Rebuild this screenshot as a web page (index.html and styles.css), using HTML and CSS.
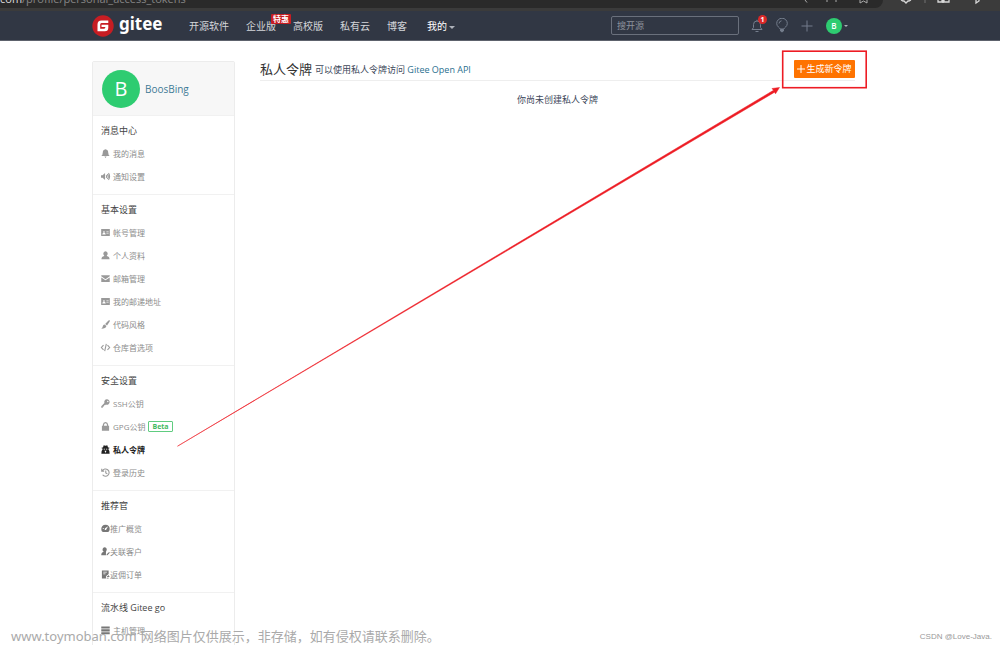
FILE: index.html
```html
<!DOCTYPE html>
<html lang="zh-CN">
<head>
<meta charset="utf-8">
<title>私人令牌 - Gitee</title>
<link rel="stylesheet" href="styles.css">
</head>
<body>
<div class="page">
  <div class="browser">
    <div class="address"><span class="url"><b>com</b>/profile/personal_access_tokens</span>
      <svg class="address-icons" width="70" height="8" viewBox="0 0 70 8" fill="none" stroke="#aaa"><path d="M5 0l2 2.500M27 0v2M36 0v2M60 0v3l3.500-2 3.500 2V0"/></svg>
    </div>
    <svg class="browser-icons" width="100" height="8" viewBox="0 0 100 8" fill="none" stroke="#d8d8d8" stroke-width="1.300"><path d="M1 0l2 1h1l2 2 2-2h1l2-1M38 0v2h4V0M43 0v3M44 0v2h5V0M76 0v3l3-2V0"/><path stroke="#666" d="M25 0v3"/></svg>
  </div>

  <header class="topbar">
    <a class="logo" href="#" aria-label="gitee">
      <svg width="22" height="22" viewBox="0 0 22 22"><circle cx="11" cy="11" r="10.700" fill="#c71d23"/><path d="M16.300 5.500H9.500Q5.500 5.500 5.500 9.500v6.700h7.300q3.500 0 3.500-3.500V9.800H9.500v2.300h3.900q-.1 1.600-1.300 1.600H8.200V9.500q0-1.500 1.300-1.500h6.800z" fill="#fff"/></svg>
      <span class="wordmark">gitee</span>
    </a>
    <nav class="nav">
      <a href="#">开源软件</a>
      <a href="#" class="hot">企业版<span class="tag">特惠</span></a>
      <a href="#">高校版</a>
      <a href="#">私有云</a>
      <a href="#">博客</a>
      <a href="#" class="mine">我的<i class="caret"></i></a>
    </nav>
    <input class="search" type="text" placeholder="搜开源" aria-label="搜开源">
    <div class="tools">
      <button class="tool bell" aria-label="通知">
        <svg width="12" height="14" viewBox="0 0 12 14" fill="none" stroke="#747d8c"><path d="M1 10.500h10L9.500 8.500V5.500a3.500 3.500 0 0 0-7 0v3zM6 2V.8M4.500 12.500h3"/></svg>
        <span class="count">1</span>
      </button>
      <button class="tool" aria-label="推荐">
        <svg width="12" height="15" viewBox="0 0 12 15" fill="none" stroke="#747d8c"><path d="M4.200 11C3.800 9.500.7 8.700.7 5.500a5.300 5.300 0 0 1 10.600 0c0 3.200-3.100 4-3.500 5.500zM3 5.500a3 3 0 0 1 2.500-2.700"/><path d="M4.500 11.500h3v1.500L6 14l-1.500-1z" fill="#747d8c"/></svg>
      </button>
      <button class="tool" aria-label="新建">
        <svg width="12" height="12" viewBox="0 0 12 12" stroke="#747d8c"><path d="M6 .5v11M.5 6h11"/></svg>
      </button>
      <button class="tool account" aria-label="账户"><span class="avatar small">B</span><i class="caret"></i></button>
    </div>
  </header>

  <div class="layout">
    <aside class="sidebar">
      <div class="profile"><span class="avatar">B</span><a href="#">BoosBing</a></div>
      <section class="group">
        <h2>消息中心</h2>
        <a href="#"><svg class="icon" viewBox="0 0 10 10"><path d="M5 .3Q8 .8 8 4q0 2.500 1.700 3.900H.3Q2 6.500 2 4q0-3.200 3-3.700zM3.800 8.300h2.400L5 9.900z"/></svg>我的消息</a>
        <a href="#"><svg class="icon" viewBox="0 0 10 10"><path d="M0 3.500h1.800L4.500 1v8L1.800 6.500H0z"/><path class="line" d="M5.700 3.500q1.300 1.500 0 3M7 2.300q2.200 2.700 0 5.400M8.300 1.200q2.500 3.800 0 7.600"/></svg>通知设置</a>
      </section>
      <section class="group">
        <h2>基本设置</h2>
        <a href="#"><svg class="icon" viewBox="0 0 10 10"><path fill-rule="evenodd" d="M.2 1.200h9.600v7.600H.2zM1.500 2.700v4.500h3.700Q5 5.500 3.800 5.200q.8-1.700-.5-1.900Q2 3.500 2.800 5.200L1.500 6.500V2.700zM6 3.200V4h2.500v-.8zM6 5.200V6h2.500v-.8z"/></svg>帐号管理</a>
        <a href="#"><svg class="icon" viewBox="0 0 10 10"><path d="M5 .3a2.400 2.600 0 0 1 1.500 4.600v.6Q9.500 6 9.500 9.300h-9Q.5 6 3.500 5.500v-.6A2.400 2.600 0 0 1 5 .3z"/></svg>个人资料</a>
        <a href="#"><svg class="icon" viewBox="0 0 10 10"><path d="M.3 1.300h9.400v1.300L5 5.800.3 2.600zM.3 3.800L5 7l4.700-3.200v5H.3z"/></svg>邮箱管理</a>
        <a href="#"><svg class="icon" viewBox="0 0 10 10"><path fill-rule="evenodd" d="M.2 1.200h9.600v7.600H.2zM1.500 2.700v4.500h3.700Q5 5.500 3.800 5.200q.8-1.700-.5-1.900Q2 3.500 2.800 5.200L1.500 6.500V2.700zM6 3.200V4h2.500v-.8zM6 5.200V6h2.500v-.8z"/></svg>我的邮递地址</a>
        <a href="#"><svg class="icon" viewBox="0 0 10 10"><path d="M9.700.3Q10.200.8 9.500 2L6.700 6 4.600 4.400 8.300.6Q9.200 0 9.700.3zM4 5l2 1.600Q5.500 9.700.3 9.700 2 8.500 2 7 2.300 5.200 4 5z"/></svg>代码风格</a>
        <a href="#"><svg class="icon" viewBox="0 0 10 10"><path class="line" d="M2.800 2.300L.4 5l2.400 2.700M7.200 2.300L9.600 5 7.200 7.700M5.900 1L4.100 9"/></svg>仓库首选项</a>
      </section>
      <section class="group">
        <h2>安全设置</h2>
        <a href="#"><svg class="icon" viewBox="0 0 10 10"><path fill-rule="evenodd" d="M6.500.4a3 3 0 1 1-1 5.800L4.500 7H3.300v1.300H2v1.300H.3V8L3.800 4.500A3 3 0 0 1 6.500.4zM7.500 1.900a.8.8 0 1 0 .1 1.600.8.800 0 0 0-.1-1.600z"/></svg>SSH公钥</a>
        <a href="#"><svg class="icon" viewBox="0 0 10 10"><path fill-rule="evenodd" d="M1 4.300h1V3q.3-2.800 3-2.900Q7.700.2 8 3v1.300h1v5.400H1zM3.400 4.300h3.200V3Q6.400 1.600 5 1.500 3.600 1.600 3.400 3z"/></svg>GPG公钥<span class="beta">Beta</span></a>
        <a href="#" class="active" aria-current="page"><svg class="icon" viewBox="0 0 10 10"><path fill-rule="evenodd" d="M3 .2l2 .6 2-.6.8 2.600H9.200v1H8.300V5q1.400.8 1.300 4.700H.4Q.3 5.800 1.700 5V3.800H.8v-1h1.400zM3 4.200v.9h1.500v-.9zM5.500 4.200v.9H7v-.9zM3.900 6.500L5 8.800l1.100-2.300z"/></svg>私人令牌</a>
        <a href="#"><svg class="icon" viewBox="0 0 10 10"><path class="line" d="M1.500 3.200a4 4 0 1 1 .3 4.300M.8.800v2.700h2.700M5.300 2.700v2.700l1.700 1"/></svg>登录历史</a>
      </section>
      <section class="group compact">
        <h2>推荐官</h2>
        <a href="#"><svg class="icon" viewBox="0 0 10 10"><path fill-rule="evenodd" d="M5 .8q4.700.2 4.700 4.700Q9.500 8 8 9H2Q.3 8 .3 5.500.5 1 5 .8zM8 2.500L4.500 4.800Q3.500 6 4.500 6.700 5.700 7 6 5.800zM2 4.500v1h1v-1z"/></svg>推广概览</a>
        <a href="#"><svg class="icon" viewBox="0 0 10 10"><path d="M4.300.3a2.300 2.600 0 0 1 1.400 4.500L5.500 6v3.300H.3Q.1 6 3 5.200A2.500 2.600 0 0 1 4.300.3zM6.300 8L9 5.500l.8.8-2.700 2.900H6.300z"/></svg>关联客户</a>
        <a href="#"><svg class="icon" viewBox="0 0 10 10"><path fill-rule="evenodd" d="M1 .5h7.500v4L5.500 7v2.500H1zM2.500 2v.8h4V2zM2.500 4v.8h2.500V4zM6.300 7.500l2.500-2V7h.7v.8H6.300zM6.300 8.500h2.200v.9h-2.200z"/></svg>返佣订单</a>
      </section>
      <section class="group">
        <h2>流水线 Gitee go</h2>
        <a href="#"><svg class="icon dark" viewBox="0 0 10 10"><path d="M.3.500h9.400v2.400H.3zM.3 3.700h9.400v2.400H.3zM.3 6.900h9.400v2.400H.3z"/></svg>主机管理</a>
      </section>
    </aside>

    <main class="content">
      <div class="heading">
        <h1>私人令牌</h1>
        <p>可以使用私人令牌访问 <a href="#">Gitee Open API</a></p>
        <button class="create"><svg width="8" height="8" viewBox="0 0 8 8" stroke="#fff"><path d="M4 0v8M0 4h8"/></svg>生成新令牌</button>
      </div>
      <p class="empty">你尚未创建私人令牌</p>
    </main>
  </div>

  <svg class="annotation" width="1000" height="645" viewBox="0 0 1000 645" aria-hidden="true">
    <path d="M177.500 446.200L773.500 90.300 772 88.500 779.500 87.500 775.500 93.800 774.600 92.200z" fill="#ed1c24" stroke="#ed1c24" stroke-width=".5"/>
    <rect x="782.700" y="51.200" width="83.500" height="36.500" fill="none" stroke="#ed1c24" stroke-width="1.600"/>
  </svg>
  <div class="watermark"><span>www.toymoban.com</span><span>网络图片仅供展示，非存储，如有侵权请联系删除。</span></div>
  <div class="credit">CSDN @Love-Java.</div>
</div>
</body>
</html>
```
FILE: styles.css
```css
* { box-sizing: border-box; }
body {
  margin: 0;
  background: #fff;
  color: #40485b;
  font: 9px/14px "Open Sans", "Noto Sans CJK SC", sans-serif;
}
a { color: inherit; text-decoration: none; }
h1, h2, p { margin: 0; font-weight: 400; }
button { border: 0; padding: 0; background: none; font: inherit; cursor: pointer; }
.page { position: relative; height: 100vh; overflow: hidden; }

.browser { display: flex; height: 11px; background: #3b3b3b; overflow: hidden; }
.address {
  display: flex;
  justify-content: space-between;
  flex: 0 0 883px;
  height: 8px;
  padding-right: 13px;
  background: #2a2a2a;
  border-bottom-right-radius: 8px;
  overflow: hidden;
}
.url { margin-top: -9px; color: #858585; font-size: 11px; line-height: 16px; }
.url b { color: #ddd; font-weight: 400; }
.browser-icons { margin-left: 17px; }

.topbar {
  display: flex;
  align-items: center;
  height: 30px;
  padding: 0 152px 0 92px;
  background: #313744;
  border-bottom: 1px solid #5d626c;
  color: #d4d6da;
}
.logo { display: flex; align-items: center; gap: 5px; width: 97px; }
.wordmark { color: #fff; font: 700 17px/22px "Noto Sans", sans-serif; margin-top: -3px; }
.nav { display: flex; gap: 17px; font-size: 10px; }
.hot { position: relative; }
.tag {
  position: absolute;
  left: 25px;
  top: -5px;
  width: 20px;
  border-radius: 1px;
  background: #c71d23;
  color: #fff;
  font-size: 8px;
  font-weight: 700;
  line-height: 10px;
  text-align: center;
}
.mine { margin-left: 3px; color: #fff; }
.caret {
  display: inline-block;
  margin-left: 2px;
  border: 3px solid transparent;
  border-top-color: #aeb2ba;
  border-bottom: 0;
  vertical-align: 1px;
}
.search {
  width: 128px;
  height: 19px;
  margin-left: auto;
  padding: 0 5px;
  border: 1px solid #6a707c;
  border-radius: 2px;
  background: transparent;
  color: #fff;
  font: inherit;
}
.search::placeholder { color: #8d929c; opacity: 1; }
.tools { display: flex; align-items: center; gap: 13px; margin-left: 12px; }
.tool { display: flex; align-items: center; position: relative; }
.count {
  position: absolute;
  left: 7px;
  top: -4px;
  width: 9px;
  border-radius: 50%;
  background: #db2828;
  color: #fff;
  font-size: 7px;
  font-weight: 700;
  line-height: 9px;
  text-align: center;
}
.avatar {
  display: block;
  width: 38px;
  border-radius: 50%;
  background: #2ecc71;
  color: #fff;
  font-size: 20px;
  line-height: 38px;
  text-align: center;
}
.small { width: 16px; font-size: 8px; font-weight: 600; line-height: 16px; }
.account .caret { border-width: 2px 2px 0; }

.layout {
  display: flex;
  align-items: flex-start;
  gap: 25px;
  padding: 20px 145px 0 92px;
}
.sidebar {
  flex: 0 0 143px;
  border: 1px solid #ececec;
  border-radius: 2px;
}
.profile {
  display: flex;
  align-items: center;
  gap: 5px;
  height: 53px;
  padding: 0 9px;
  background: #f7f7f7;
  color: #3f7b96;
  font-size: 10px;
}
.group { padding: 0 8px 6px; border-top: 1px solid #f1f1f1; }
.group h2 { font-size: 9px; line-height: 30px; height: 26px; color: #444; }
.group a {
  display: flex;
  align-items: center;
  gap: 3px;
  height: 23px;
  color: #8c8c8c;
  font-size: 8px;
}
.compact a { gap: 0; }
.icon { flex: none; width: 9px; height: 9px; fill: #999; overflow: visible; }
.line { fill: none; stroke: #999; stroke-width: 1.2; }
.compact .icon, .dark { fill: #777; }
.group .active { color: #222; font-weight: 700; }
.active .icon { fill: #222; }
.beta {
  padding: 0 3px;
  border: 1px solid #60cc80;
  border-radius: 1px;
  color: #42ba62;
  font-size: 7px;
  font-weight: 700;
  line-height: 9px;
}

.content { flex: 1; min-width: 0; }
.heading {
  display: flex;
  align-items: center;
  gap: 3px;
  height: 20px;
  border-bottom: 1px solid #eee;
}
.heading h1 { font-size: 13px; line-height: 18px; color: #333; margin-top: -4px; }
.heading a { color: #2a6f8f; }
.heading p { margin-top: -2px; }
.create {
  display: flex;
  align-items: center;
  justify-content: center;
  gap: 1px;
  width: 61px;
  height: 18px;
  margin: -4px 0 0 auto;
  border-radius: 1px;
  background: #fe7300;
  color: #fff;
}
.empty { padding-top: 12px; text-align: center; }

.annotation { position: absolute; left: 0; top: 0; pointer-events: none; }
.watermark {
  position: absolute;
  left: 11px;
  bottom: 0;
  display: flex;
  gap: 4px;
  color: #aaa;
  font: 13px/18px "Noto Sans", "Noto Sans CJK SC", sans-serif;
}
.credit {
  position: absolute;
  right: 8px;
  bottom: 1px;
  color: #999;
  font: 8px/14px "Liberation Sans", sans-serif;
}
```
